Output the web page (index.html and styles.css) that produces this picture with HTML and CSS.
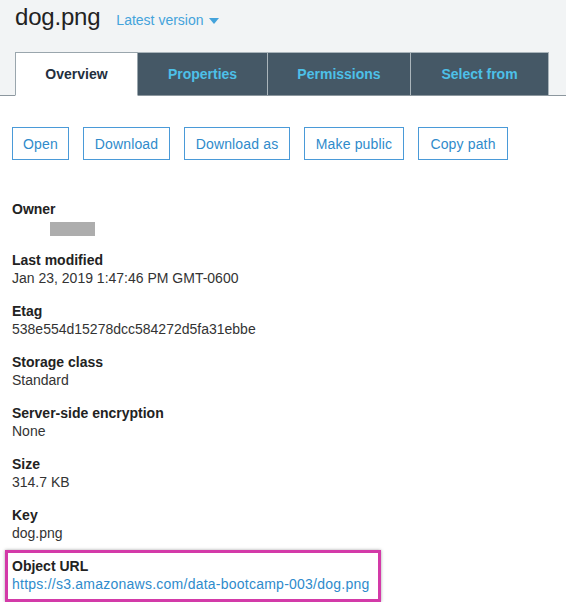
FILE: index.html
```
<!DOCTYPE html>
<html>
<head>
<meta charset="utf-8">
<link rel="stylesheet" href="styles.css">
</head>
<body>
<header class="header">
  <div class="title-row">
    <h1 class="title">dog.png</h1>
    <span class="version">Latest version <span class="caret"></span></span>
  </div>
  <nav class="tabs">
    <div class="tab tab-active">Overview</div>
    <div class="tab tab-props">Properties</div>
    <div class="tab tab-perms">Permissions</div>
    <div class="tab tab-select">Select from</div>
  </nav>
</header>
<main class="content">
  <div class="actions">
    <button class="btn btn-open">Open</button>
    <button class="btn btn-dl">Download</button>
    <button class="btn btn-dlas">Download as</button>
    <button class="btn btn-public">Make public</button>
    <button class="btn btn-copy">Copy path</button>
  </div>
  <dl class="props">
    <div class="prop">
      <dt>Owner</dt>
      <dd><span class="redacted"></span></dd>
    </div>
    <div class="prop">
      <dt>Last modified</dt>
      <dd>Jan 23, 2019 1:47:46 PM GMT-0600</dd>
    </div>
    <div class="prop">
      <dt>Etag</dt>
      <dd>538e554d15278dcc584272d5fa31ebbe</dd>
    </div>
    <div class="prop">
      <dt>Storage class</dt>
      <dd>Standard</dd>
    </div>
    <div class="prop">
      <dt>Server-side encryption</dt>
      <dd>None</dd>
    </div>
    <div class="prop">
      <dt>Size</dt>
      <dd>314.7 KB</dd>
    </div>
    <div class="prop">
      <dt>Key</dt>
      <dd>dog.png</dd>
    </div>
    <div class="prop prop-highlight">
      <dt>Object URL</dt>
      <dd><a class="link" href="#">https://s3.amazonaws.com/data-bootcamp-003/dog.png</a></dd>
    </div>
  </dl>
</main>
</body>
</html>
```
FILE: styles.css
```
html, body {
  margin: 0;
  padding: 0;
  background: #ffffff;
}
body {
  font-family: "Liberation Sans", Arial, Helvetica, sans-serif;
  color: #222222;
  font-size: 14px;
}
.header {
  background: #f2f4f5;
  border-bottom: 1px solid #8c979e;
  height: 96px;
  box-sizing: border-box;
  display: flex;
  flex-direction: column;
  justify-content: space-between;
}
.title-row {
  display: flex;
  align-items: baseline;
  padding: 2px 0 0 15px;
  height: 30px;
}
.title {
  margin: 0;
  font-size: 24px;
  font-weight: normal;
  color: #222;
  line-height: 30px;
  letter-spacing: -0.2px;
}
.version {
  margin-left: 16px;
  color: #44a3db;
  font-size: 14px;
  display: flex;
  align-items: center;
}
.caret {
  display: inline-block;
  width: 0;
  height: 0;
  border-left: 5px solid transparent;
  border-right: 5px solid transparent;
  border-top: 6px solid #44a3db;
  margin-left: 5px;
  margin-top: 1px;
}
.tabs {
  display: flex;
  padding-left: 15px;
  margin-bottom: -1px;
}
.tab {
  height: 43px;
  box-sizing: border-box;
  display: flex;
  align-items: center;
  justify-content: center;
  font-weight: bold;
  font-size: 14px;
  background: #455866;
  color: #4dc0e8;
  border: 1px solid #aab5bb;
  border-bottom: none;
  border-left: none;
}
.tab-active {
  background: #ffffff;
  color: #232f3e;
  border: 1px solid #9aa6ad;
  border-bottom: 1px solid #ffffff;
  width: 123px;
  height: 44px;
}
.tab-props { width: 130px; }
.tab-perms { width: 143px; }
.tab-select { width: 138px; }
.content {
  padding: 31px 12px 0 12px;
}
.actions {
  display: flex;
  gap: 14px;
}
.btn {
  font-family: inherit;
  font-size: 14px;
  color: #2f8bcb;
  background: #fff;
  border: 1px solid #4a9ad8;
  height: 33px;
  padding: 0;
  border-radius: 0;
  letter-spacing: 0.15px;
}
.btn-open { width: 57px; }
.btn-dl { width: 87px; }
.btn-dlas { width: 106px; }
.btn-public { width: 100px; }
.btn-copy { width: 90px; }
.props {
  margin: 40px 0 0 0;
}
.prop {
  margin-bottom: 15px;
}
.prop dt {
  font-weight: bold;
  line-height: 18px;
  color: #222;
}
.prop dd {
  margin: 0;
  line-height: 18px;
  color: #333;
  height: 18px;
}
.redacted {
  display: inline-block;
  width: 45px;
  height: 14px;
  background: #adadad;
  margin-left: 38px;
  vertical-align: top;
  margin-top: 4px;
}
.prop-highlight {
  width: fit-content;
  margin: -7px 0 0 -7px;
  padding: 4px 8px 6px 4px;
  border: 3px solid #d33aa8;
  box-shadow: 0 0 3px rgba(0,0,0,0.35);
}
.link {
  color: #2e8bcc;
  text-decoration: none;
  letter-spacing: 0.24px;
}
```
